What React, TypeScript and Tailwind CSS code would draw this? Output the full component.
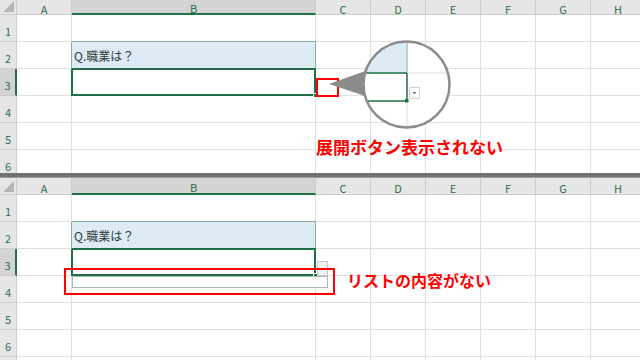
import React from "react";

const COLS = ["", "A", "B", "C", "D", "E", "F", "G", "H"];
const ROWS = [0, 1, 2, 3, 4, 5, 6, 7];
const FONT = { fontFamily: '"Noto Sans CJK JP", "Noto Sans", sans-serif' };

function Cell({ r, c }: { r: number; c: number }) {
  if (r === 0 && c === 0) {
    return (
      <div className="flex items-end justify-end pr-[1px] pb-[1px] bg-[#e6e6e6] border-r border-b border-[#cdcdcd]">
        <svg width="12" height="12" viewBox="0 0 12 12">
          <polygon points="0,11 11,11 11,0" fill="#b5b5b5" />
        </svg>
      </div>
    );
  }
  if (r === 0) {
    const sel = c === 2;
    return (
      <div
        className={
          sel
            ? "flex items-center justify-center pt-[4px] leading-none bg-[#d4d4d4] border-r border-[#cdcdcd] border-b-2 border-b-[#217346] text-[11px] text-[#2a6b47]"
            : "flex items-center justify-center pt-[4px] leading-none bg-[#e6e6e6] border-r border-b border-[#cdcdcd] text-[11px] text-[#2f6e4b]"
        }
      >
        {COLS[c]}
      </div>
    );
  }
  if (c === 0) {
    const sel = r === 3;
    return (
      <div
        className={
          sel
            ? "flex items-end justify-center pb-[2px] bg-[#d4d4d4] border-b border-[#cdcdcd] border-r-2 border-r-[#217346] text-[11px] text-[#2a6b47]"
            : "flex items-end justify-center pb-[2px] bg-[#e6e6e6] border-r border-b border-[#cdcdcd] text-[11px] text-[#2f6e4b]"
        }
      >
        {r < 7 ? r : ""}
      </div>
    );
  }
  if (c === 2 && r === 2) {
    return (
      <div className="flex items-end pb-[3px] pl-[2px] bg-[#ddebf7] border-r border-b border-[#89ab9b] shadow-[0_-1px_0_#89ab9b,-1px_0_0_#89ab9b] text-[12px] text-[#2f3d35]">
        Q.職業は？
      </div>
    );
  }
  if (c === 2 && r === 3) {
    return (
      <div className="relative bg-white border-t border-l border-r-2 border-b-2 border-[#1f6e45] shadow-[0_-1px_0_#1f6e45,-1px_0_0_#1f6e45]">
        <div className="absolute right-[-4px] bottom-[-4px] w-[5px] h-[5px] bg-[#1f6e45] border border-white" />
      </div>
    );
  }
  return <div className="bg-white border-r border-b border-[#e0e0e0]" />;
}

function Grid({ top }: { top?: boolean }) {
  return (
    <div
      className={
        top
          ? "grid grid-cols-[17px_55px_244px_55px_55px_55px_55px_55px_55px] grid-rows-[15px_repeat(7,27px)] w-[646px]"
          : "grid grid-cols-[17px_55px_244px_55px_55px_55px_55px_55px_55px] grid-rows-[17px_repeat(7,27px)] w-[646px]"
      }
    >
      {ROWS.map((r) => COLS.map((_, c) => <Cell key={`${r}-${c}`} r={r} c={c} />))}
    </div>
  );
}

export default function App() {
  return (
    <div className="w-[640px] h-[360px] overflow-hidden bg-white flex flex-col" style={FONT}>
      {/* Top pane */}
      <div className="relative h-[173px] shrink-0 overflow-hidden">
        <Grid top />
        <div className="absolute left-[316px] top-[78px] w-[23px] h-[19px] border-2 border-[#ff0000]" />
        <svg className="absolute left-0 top-0" width="640" height="173">
          <defs>
            <clipPath id="lens">
              <circle cx="406.5" cy="84.5" r="43" />
            </clipPath>
          </defs>
          <polygon points="329,84 368,70 368,97" fill="#8c8c8c" />
          <circle cx="406.5" cy="84.5" r="43" fill="#ffffff" />
          <g clipPath="url(#lens)">
            <rect x="360" y="40" width="47" height="33" fill="#ddebf7" />
            <line x1="407" y1="40" x2="407" y2="73" stroke="#89ab9b" strokeWidth="1" />
            <line x1="407" y1="73" x2="452" y2="73" stroke="#dcdcdc" strokeWidth="1" />
            <line x1="407" y1="101" x2="407" y2="130" stroke="#dcdcdc" strokeWidth="1" />
            <line x1="360" y1="73" x2="407" y2="73" stroke="#1f6e45" strokeWidth="1.5" />
            <line x1="407" y1="73" x2="407" y2="101" stroke="#1f6e45" strokeWidth="1.5" />
            <line x1="360" y1="101" x2="407" y2="101" stroke="#1f6e45" strokeWidth="1.5" />
            <rect x="405" y="99" width="3.5" height="3.5" fill="#1f6e45" />
            <rect x="409.5" y="87.5" width="10" height="11" fill="#ffffff" stroke="#cfcfcf" strokeWidth="1" />
            <polygon points="412.5,92 416.5,92 414.5,94.5" fill="#777777" />
          </g>
          <circle cx="406.5" cy="84.5" r="43" fill="none" stroke="#8c8c8c" strokeWidth="2.5" />
        </svg>
        <div className="absolute left-[316px] top-[136px] text-[17px] leading-[22px] font-bold text-[#ff0000] whitespace-nowrap">
          展開ボタン表示されない
        </div>
      </div>

      {/* Splitter */}
      <div className="h-[5px] shrink-0 bg-[#717171] border-b border-[#9a9a9a]" />

      {/* Bottom pane */}
      <div className="relative h-[182px] shrink-0 overflow-hidden">
        <Grid />
        <div className="absolute left-[317px] top-[83px] w-[11px] h-[15px] bg-[#f0f0f0] border border-[#c6c6c6]" />
        <div className="absolute left-[72px] top-[98px] w-[256px] h-[12px] bg-white border border-[#a6bcaf]" />
        <div className="absolute left-[64px] top-[90px] w-[271px] h-[27px] border-2 border-[#ff0000]" />
        <div className="absolute left-[347px] top-[91px] text-[16px] leading-[22px] font-bold text-[#ff0000] whitespace-nowrap">
          リストの内容がない
        </div>
      </div>
    </div>
  );
}
